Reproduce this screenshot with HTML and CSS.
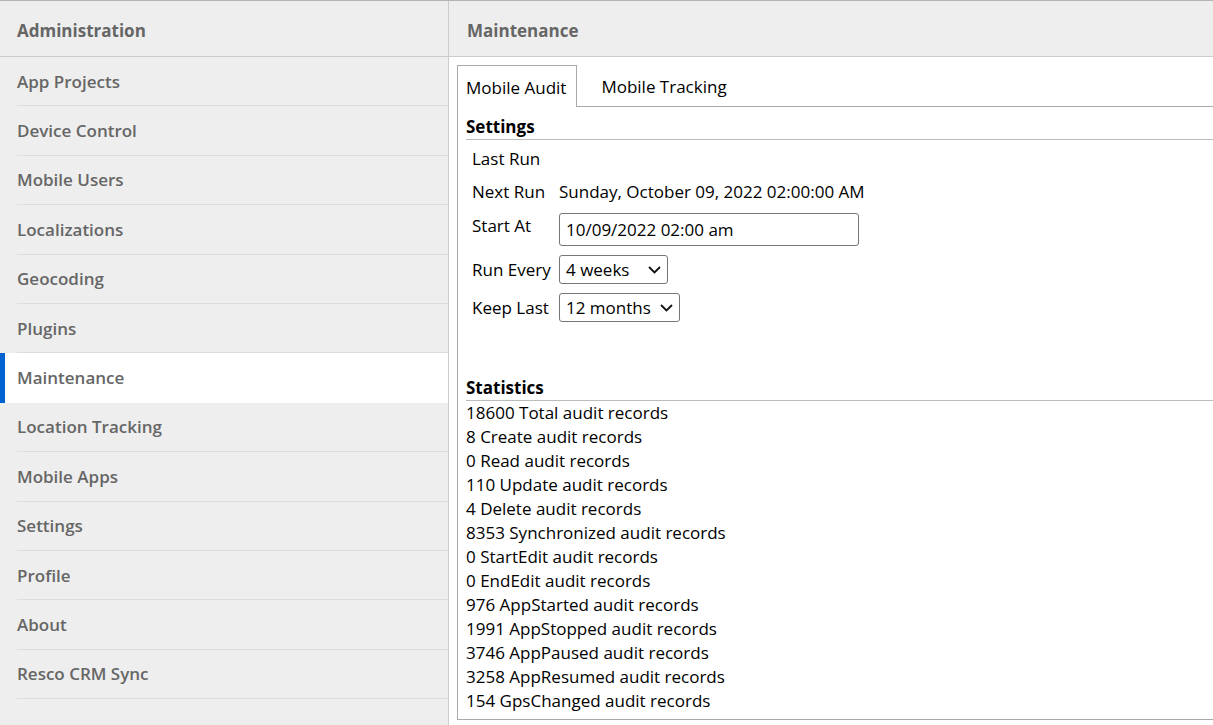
FILE: index.html
```html
<!DOCTYPE html>
<html>
<head>
    <meta charset="UTF-8">
    <title>Administration - Maintenance</title>
    <link rel="stylesheet" href="styles.css">
</head>
<body>
    <div class="layout">
        <div class="sidebar">
            <div class="sidebar-header">Administration</div>
            <div class="nav">
                <a class="nav-item"><span class="nav-label">App Projects</span></a>
                <a class="nav-item"><span class="nav-label">Device Control</span></a>
                <a class="nav-item"><span class="nav-label">Mobile Users</span></a>
                <a class="nav-item"><span class="nav-label">Localizations</span></a>
                <a class="nav-item"><span class="nav-label">Geocoding</span></a>
                <a class="nav-item"><span class="nav-label">Plugins</span></a>
                <a class="nav-item active"><span class="nav-label">Maintenance</span></a>
                <a class="nav-item"><span class="nav-label">Location Tracking</span></a>
                <a class="nav-item"><span class="nav-label">Mobile Apps</span></a>
                <a class="nav-item"><span class="nav-label">Settings</span></a>
                <a class="nav-item"><span class="nav-label">Profile</span></a>
                <a class="nav-item"><span class="nav-label">About</span></a>
                <a class="nav-item"><span class="nav-label">Resco CRM Sync</span></a>
            </div>
        </div>

        <div class="main">
            <div class="main-header">Maintenance</div>
            <div class="main-body">
                <div class="tabs">
                    <div class="tab active">Mobile Audit</div>
                    <div class="tab">Mobile Tracking</div>
                </div>
                <div class="tab-panel">
                    <div class="section-title">Settings</div>
                    <div class="settings">
                        <div class="field-label">Last Run</div>
                        <div class="field-value"></div>

                        <div class="field-label">Next Run</div>
                        <div class="field-value">Sunday, October 09, 2022 02:00:00 AM</div>

                        <div class="field-label top">Start At</div>
                        <div class="field-value"><input class="text-input" type="text" value="10/09/2022 02:00 am"></div>

                        <div class="field-label">Run Every</div>
                        <div class="field-value">
                            <span class="select-wrap">
                                <select class="select select-weeks">
                                    <option>1 week</option>
                                    <option>2 weeks</option>
                                    <option selected>4 weeks</option>
                                </select>
                                <svg class="chevron" width="13" height="8" viewBox="0 0 13 8"><path d="M1 1l5.5 5.5L12 1" fill="none" stroke="#111" stroke-width="1.8"/></svg>
                            </span>
                        </div>

                        <div class="field-label">Keep Last</div>
                        <div class="field-value">
                            <span class="select-wrap">
                                <select class="select select-months">
                                    <option>3 months</option>
                                    <option>6 months</option>
                                    <option selected>12 months</option>
                                </select>
                                <svg class="chevron" width="13" height="8" viewBox="0 0 13 8"><path d="M1 1l5.5 5.5L12 1" fill="none" stroke="#111" stroke-width="1.8"/></svg>
                            </span>
                        </div>
                    </div>

                    <div class="section-title stats-title">Statistics</div>
                    <div class="stats">
                        <div>18600 Total audit records</div>
                        <div>8 Create audit records</div>
                        <div>0 Read audit records</div>
                        <div>110 Update audit records</div>
                        <div>4 Delete audit records</div>
                        <div>8353 Synchronized audit records</div>
                        <div>0 StartEdit audit records</div>
                        <div>0 EndEdit audit records</div>
                        <div>976 AppStarted audit records</div>
                        <div>1991 AppStopped audit records</div>
                        <div>3746 AppPaused audit records</div>
                        <div>3258 AppResumed audit records</div>
                        <div>154 GpsChanged audit records</div>
                    </div>
                </div>
            </div>
        </div>
    </div>
</body>
</html>
```

FILE: styles.css
```css
html, body {
    height: 100%;
}

body {
    margin: 0;
    font-family: 'Open Sans', 'Noto Sans', sans-serif;
    font-size: 17px;
    color: #000;
    background: #fff;
    overflow: hidden;
}

.layout {
    display: flex;
    height: 100%;
    box-sizing: border-box;
    border-top: 1px solid #b4b4b4;
}

/* sidebar */

.sidebar {
    width: 448px;
    flex-shrink: 0;
    background: #eeeeee;
    border-right: 1px solid #cccccc;
}

.sidebar-header {
    height: 52px;
    display: flex;
    align-items: center;
    padding: 3px 0 0 17px;
    border-bottom: 1px solid #cccccc;
    font-size: 17px;
    font-weight: 700;
    color: #666;
}

.nav-item {
    display: block;
    padding-left: 17px;
    color: #666;
    font-size: 17px;
    font-weight: 600;
    cursor: pointer;
}

.nav-label {
    display: flex;
    align-items: center;
    height: 48.4px;
    border-bottom: 1px solid #dddddd;
}

.nav-item.active {
    background: #fff;
    border-left: 5px solid #0063cf;
    padding-left: 12px;
}

.nav-item.active .nav-label {
    border-bottom-color: transparent;
}

/* main */

.main {
    flex: 1;
    display: flex;
    flex-direction: column;
    min-width: 0;
}

.main-header {
    height: 52px;
    display: flex;
    align-items: center;
    padding: 3px 0 0 18px;
    background: #eeeeee;
    border-bottom: 1px solid #cccccc;
    font-size: 17px;
    font-weight: 700;
    color: #666;
}

.main-body {
    flex: 1;
    display: flex;
    flex-direction: column;
    padding: 8px 0 5px 8px;
    min-height: 0;
}

.tabs {
    display: flex;
    height: 41px;
    gap: 16px;
}

.tab {
    display: flex;
    align-items: center;
    padding: 1px 8px 0 8px;
    cursor: pointer;
}

.tab.active {
    background: #fff;
    border: 1px solid #aaaaaa;
    border-bottom: none;
    margin-bottom: -1px;
    position: relative;
    z-index: 1;
    padding-right: 10px;
}

.tab-panel {
    flex: 1;
    border: 1px solid #aaaaaa;
    margin-right: -2px;
    padding: 8px 0 0 8px;
}

.section-title {
    font-weight: 700;
    line-height: 24px;
    border-bottom: 1px solid #bbbbbb;
}

.settings {
    display: grid;
    grid-template-columns: 87px 1fr;
    align-items: center;
    row-gap: 9px;
    padding: 7px 0 0 6px;
}

.field-label,
.field-value {
    line-height: 24px;
    min-height: 24px;
}

.field-label.top {
    align-self: start;
    padding-top: 1px;
}

.text-input {
    box-sizing: border-box;
    width: 300px;
    height: 33px;
    padding: 0 6px;
    border: 1px solid #767676;
    border-radius: 3px;
    font: inherit;
    color: #000;
    vertical-align: middle;
}

.select-wrap {
    position: relative;
    display: inline-block;
    vertical-align: middle;
}

.select {
    display: block;
    box-sizing: border-box;
    height: 29px;
    padding: 0 0 0 6px;
    border: 1px solid #767676;
    border-radius: 3px;
    font: inherit;
    color: #000;
    background: #fff;
    appearance: none;
    -webkit-appearance: none;
}

.chevron {
    position: absolute;
    right: 7px;
    top: 11px;
    pointer-events: none;
}

.select-weeks {
    width: 109px;
}

.select-months {
    width: 121px;
}

.stats-title {
    margin-top: 54px;
}

.stats div {
    line-height: 24px;
}
```
